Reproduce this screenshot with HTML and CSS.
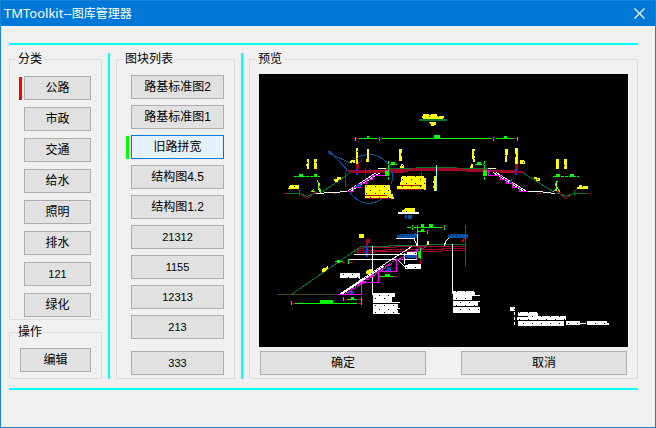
FILE: index.html
```html
<!DOCTYPE html>
<html lang="zh-CN">
<head>
<meta charset="utf-8">
<title>TMToolkit--图库管理器</title>
<link rel="stylesheet" href="styles.css">
</head>
<body>
<div class="window">
  <header class="titlebar">
    <h1><span class="product">TMToolkit--</span>图库管理器</h1>
    <button class="close" type="button" aria-label="关闭">
      <svg width="11" height="11" viewBox="0 0 11 11"><path d="M.5 .5l10 10M10.5 .5l-10 10"/></svg>
    </button>
  </header>
  <main>
    <div class="rule"></div>
    <div class="columns">
      <div class="side">
        <fieldset>
          <legend>分类</legend>
          <div class="categories">
            <button type="button" class="marked red">公路</button>
            <button type="button">市政</button>
            <button type="button">交通</button>
            <button type="button">给水</button>
            <button type="button">照明</button>
            <button type="button">排水</button>
            <button type="button" class="num">121</button>
            <button type="button">绿化</button>
          </div>
        </fieldset>
        <fieldset>
          <legend>操作</legend>
          <div class="actions"><button type="button">编辑</button></div>
        </fieldset>
      </div>
      <div class="divider"></div>
      <fieldset>
        <legend>图块列表</legend>
        <div class="blocks">
          <button type="button">路基标准图2</button>
          <button type="button">路基标准图1</button>
          <button type="button" class="marked green selected">旧路拼宽</button>
          <button type="button">结构图4.5</button>
          <button type="button">结构图1.2</button>
          <button type="button" class="num">21312</button>
          <button type="button" class="num">1155</button>
          <button type="button" class="num">12313</button>
          <button type="button" class="num">213</button>
          <button type="button" class="num last">333</button>
        </div>
      </fieldset>
      <div class="divider"></div>
      <fieldset>
        <legend>预览</legend>
        <div class="preview">
          <svg class="drawing" viewBox="259 74 369 273" role="img" aria-label="旧路拼宽">
            <defs>
              <pattern id="grain" width="9" height="7" patternUnits="userSpaceOnUse">
                <rect width="9" height="7" fill="#fff"/>
                <path d="M1 1h1v1h-1zM6 4h1v1h-1z"/>
              </pattern>
              <mask id="lettering" maskUnits="userSpaceOnUse" x="259" y="74" width="369" height="273">
                <rect x="259" y="74" width="369" height="273" fill="url(#grain)"/>
              </mask>
            </defs>
            <rect class="paper" x="259" y="74" width="369" height="273"/>

            <!-- upper section: dimension line -->
            <path class="lime" d="M355 138.500H517M355.500 137v4M493.500 137v4M517.500 137v4M379.500 137v4"/>
            <path class="crimson" d="M356 138.500h3M377 138.500h5M491 138.500h5M514 138.500h3"/>
            <path class="lime-fill" d="M367 136h2v2h-2zM434 135h6v4h-6zM504 136h3v3h-3z"/>

            <!-- upper section: ground, slopes and ditches -->
            <path class="forest" d="M283 193.500H300L307 196.500 314 193.500H320L352 171.500M522 172.500L553 191.500M556 193.500H559L566 196.500 573 193.500H590M299.500 190v6M574.500 190v6"/>
            <path class="crimson" d="M283 193.500h4M301 194.500l6 4 6-4M587 193.500h4M560 194.500l6 4 6-4M574 192l4-4M296 188l3 3M333 193.500h3M537 193.500h4M311 191.500l6 1M556 191.500l5 1"/>
            <path class="white" d="M316 193.500h8M324 192.500h10l13-1L378 171.500M350 191.500L382 171.500M496 172.500L527 191.500h12l16 2M493 172.500L524 191.500M378 168.500h8M488 168.500h8"/>
            <path class="crimson-fill" d="M354 170h30v-1h28v-1h50v1h26v1h28v1h5v1h2v1h-20v-2h-20v1h-17v-1h-58v1h-60v-2h-2v1h-4z"/>
            <path class="crimson" d="M351 172.500H404M350 171.500h4M468 171.500h55M500 172.500h24M421.500 171v5M365.500 168v10M358 163.500l4-3M517 163.500l5-2"/>
            <path class="magenta" d="M347 191.500H353.500V187.500H360.500V183.500H366.500V179.500H372.500V175.500H385.500V170.500H389M483 170.500H488.500V175.500H500.500V179.500H506.500V183.500H512.500V187.500H519.500V191.500H528"/>
            <path class="forest" d="M386 168.500h26M416 167.500h41M462 168.500h26"/>
            <path class="crimson-fill" d="M356 164h3v5h-3zM515 164h3v6h-3z"/>
            <path class="blue-fill" d="M356 169h2v2h-2zM356 173h2v2h-2zM515 169h2v2h-2zM515 173h2v2h-2z"/>
            <path class="navy-fill" d="M355 187l3-4 3 2v2zM508 182l4-3v4h-3z"/>
            <path class="cyan" d="M436.500 165v26"/>
            <path class="navy" d="M331 153L346.500 169Q344 180 346 187M349 191Q357 203 369 203.500 379 202 383 198M391 184Q395 176 391 168 382 154 369 154.500 360 155 355 159M331 154L350 163"/>
            <path class="navy-fill" d="M328 151h3v2h2v1h-3v1h-1z"/>
            <path class="lime dashed" d="M294 176.500h26M553 176.500h26M390 164.500h8M475 164.500h9M388.500 161v19M484.500 161v19"/>
            <path class="lime-fill" d="M299 174h4v3h-4zM314 174h3v3h-3zM556 174h4v3h-4zM570 174h4v3h-4zM385 171h4v5h-4zM483 171h4v5h-4zM391 162h4v3h-4zM477 162h4v3h-4z"/>
            <path class="leaf" d="M317 180l2 4-1 3 3 4M320 183l-2 5 3 5M314 189l-2 2h3M558 181l-3 4 3 3-5 4M555 184l3 5 2 3M556 181v10"/>

            <!-- lower section: road bed -->
            <path class="olive" d="M277 294.500h63"/>
            <path class="forest" d="M292 294L361 246.500H388V245.500H426V244.500H465"/>
            <path class="crimson" d="M361 248.500L366 247.500H395V246.500H465M358 250.500H386V249.500H442V248.500H465M357 252.500H374V251.500H441V250.500H465M355 252.500L361 247.500M366 254.500l-3-7"/>
            <path class="crimson-fill" d="M366 239h4v4h-2v3h-2z"/>
            <path class="blue-fill" d="M366 246h2v11h-2z"/>
            <path class="white" d="M354 254.500H412M348 259.500H398M340 294L390 260.500 412 246.500M342 294L384 266M372.500 246v49M452.500 244v50M396 238.500h18l3 7M417.500 234v12M444 246l2-5 3-3M404.500 253v11M398 260l7 7M400 259.500h17M404 254.500h12M358 277l3 3"/>
            <path class="magenta" d="M338 294.500H361.500V282.500H378.500V271.500H396.500V259.500H404M416.500 249v10"/>
            <path class="magenta dashed" d="M345 293.500L391 262.500 426 246.500M347 293.500L392 263.500"/>
            <path class="lime" d="M291 303.500h70M291.500 301v4M361.500 301v4M343 299.500h18M343.500 297v4M361.500 297v4M379 276.500h15M407 227.500h38M412.500 225v5M417.500 225v8M444.500 225v5M417 231.500h10M427.500 230v4M335 261.500h8M348.500 259v5M420.500 247v17"/>
            <path class="crimson" d="M344 299.500h3M357 299.500h4M292 303.500h3M357 303.500h4M394 276.500h3M411 227.500h3M442 227.500h3M425 231.500h3M342 262.500h3M349 262.500h4M420.500 259v5M418 247.500h4"/>
            <path class="lime-fill" d="M320 300h13v4h-13zM351 297h3v3h-3zM385 274h5v3h-5zM421 224h3v4h-3zM429 224h4v4h-4zM421 229h3v3h-3zM337 260h3v3h-3zM418 251h3v7h-3z"/>
            <path class="navy-fill" d="M349 293l2-2h3v3h-5zM384 271l5-4h2v4zM406 255h10v3h-10z"/>
            <path class="red" d="M465.500 225v41M462 242l3-4"/>

            <!-- annotation lettering, drawn as dense strokes at this scale -->
            <g mask="url(#lettering)">
              <path class="yellow-fill" d="M422 118v-2h1v-2h6v1h2v-1h6v2h7v2h-1v1h-20zM429 122h7v3h-2v1h-3v-2h-2z"/>
              <path class="yellow-fill" d="M307 159h2v10h-2v-3h-1v-2h1zM314 159h3v10h-3zM356 148h2v16h-2zM367 149h2v13h-3v-3h1zM399 149h3v4h-1v3h1v5h-3zM401 164h2v1h1v3h-4zM472 149h3v3h-1v4h1v6h-2v-3h-1zM471 164h2v4h-3v-2h1zM505 149h3v6h-1v7h-2zM515 148h3v16h-3v-7h1v-3h-1zM520 160h4v1h1v3h-5zM351 160h4v3h-5zM556 159h3v10h-3zM564 159h3v10h-3z"/>
              <path class="yellow-fill" d="M288 188h1v-2h1v-1h9v4h-11zM577 189v-2h2v-2h3v1h6v3zM334 179h3v-2h4v3h-3v2h-3zM534 177h3v1h3v3h-4v-2h-2z"/>
              <path class="yellow-fill" d="M365 185h25v5h1v4h2v3h1v2h-3v-1h-26zM401 177h1v-1h22v2h2v12h-2v-1h-27v-3h3v-4h1zM434 176h2v15h-2v-3h-1v-2h1v-3h-1v-2h1z"/>
              <path class="yellow-fill" d="M402 210h2v-1h1v-1h10v4h-13zM359 234h5v4h-5zM322 269l6-3v3l-4 3h-2zM366 270l6-1v2l-3 3h-3zM427 241h2v4h-2z"/>
              <path class="navy-fill" d="M405 215h2v4h-2zM408 215h4v4h-4zM397 235h3v-1h14v-1h3v5h-20zM448 238v-3h3v-1h17v4z"/>
              <path class="white-fill" d="M340 273h20v5h-20zM405 265h3v-1h13v5h-16zM407 252h10v3h-10zM373 293h22v4h-3v5h-19zM373 304h25v10h-25zM453 291h22v5h-22zM453 296h19v4h-19zM453 301h25v5h-25zM453 307h27v6h-27z"/>
              <path class="white-fill" d="M510 307h5v4h-5zM518 312h20v4h-20zM517 317h11v-1h38v4h-49zM518 321h46v5h-46zM566 321h14v2h6v1h-6v1h-14zM587 321h20v2h2v2h-22z"/>
            </g>
            <path class="white" d="M514.500 312v3M514.500 317v3M514.500 322v3M373 302.500h27M373 308.500h27M373 313.500h27M453 295.500h27M453 301.500h27M453 312.500h27"/>
            <path class="white-fill" d="M398 212h21v2h-21z"/>
            <path class="forest-fill" d="M419 119h28v2h-28z"/>
            <path class="crimson" d="M365 195.500h22M365 198.500h26M400 185.500h22M397 189.500h25"/>
          </svg>
          <div class="confirm">
            <button type="button">确定</button>
            <button type="button">取消</button>
          </div>
        </div>
      </fieldset>
    </div>
    <div class="rule"></div>
  </main>
</div>
</body>
</html>
```
FILE: styles.css
```css
* { box-sizing: border-box; }

body {
  margin: 0;
  background: #f0f0f0;
  color: #000;
  font: 12px/13px "Liberation Sans", "Noto Sans CJK SC", sans-serif;
}

.window {
  min-height: 100vh;
  border: 1px solid #1883d7;
}

.titlebar {
  display: flex;
  align-items: center;
  justify-content: space-between;
  height: 25px;
  padding: 0 4px 0 3px;
  background: #0078d7;
  color: #fff;
}

.titlebar h1 {
  margin: 0;
  font: 12px/24px "Noto Sans", "Noto Sans CJK SC", sans-serif;
}

.product { font-size: 13px; }

.titlebar .close {
  display: grid;
  place-items: center;
  width: 23px;
  height: 24px;
  padding: 0;
  border: 0;
  background: none;
}

.close path {
  fill: none;
  stroke: #fff;
  stroke-width: 1.2;
}

main { padding: 17px 17px 17px 8px; }

.rule {
  height: 2px;
  background: #0ff;
}

.columns {
  display: grid;
  grid-template-columns: 93px 2px 119px 2px minmax(0, 1fr);
  gap: 6px;
  margin: 8px 0 9px;
}

.divider { background: #0ff; }

.side {
  display: flex;
  flex-direction: column;
  gap: 6px;
}

fieldset {
  min-width: 0;
  margin: 0;
  padding: 0;
  border: 1px solid #dcdcdc;
}

legend {
  margin-left: 6px;
  padding: 0 2px;
}

button {
  position: relative;
  width: 100%;
  height: 24px;
  padding: 0;
  border: 1px solid #adadad;
  border-radius: 0;
  background: #e1e1e1;
  color: #000;
  font: inherit;
}

.num { font-size: 11px; }

.selected {
  border-color: #0078d7;
  background: #e5f1fb;
}

.marked::before {
  content: "";
  position: absolute;
  top: 0;
  bottom: -1px;
  left: -6px;
  width: 3px;
}

.red::before { background: #f00; }
.green::before { background: #0f0; }

.categories,
.blocks {
  display: flex;
  flex-direction: column;
}

.categories {
  gap: 7px;
  padding: 10px 10px 2px 14px;
}

.actions { padding: 9px 10px 6px; }

.blocks {
  gap: 6px;
  padding: 9px 10px 3px 14px;
}

.last { margin-top: 6px; }

.preview { padding: 8px 9px 3px; }

.confirm {
  display: flex;
  gap: 35px;
  padding: 4px 1px 0;
}

.drawing {
  display: block;
  width: 100%;
  height: auto;
  shape-rendering: crispEdges;
}

.drawing path { fill: none; }
.drawing .paper { fill: #000; }
.drawing .lime { stroke: #0f0; }
.drawing .leaf { stroke: #7fff00; }
.drawing .crimson { stroke: #a50029; }
.drawing .forest { stroke: #007a29; }
.drawing .olive { stroke: #4c4420; }
.drawing .white { stroke: #fff; }
.drawing .magenta { stroke: #f0f; }
.drawing .cyan { stroke: #7ff; }
.drawing .navy { stroke: #0052a5; }
.drawing .red { stroke: #f00; }
.drawing .dashed { stroke-dasharray: 3 1; }
.drawing .lime-fill { fill: #0f0; }
.drawing .crimson-fill { fill: #a50029; }
.drawing .forest-fill { fill: #007a29; }
.drawing .blue-fill { fill: #0040ff; }
.drawing .navy-fill { fill: #0052a5; }
.drawing .yellow-fill { fill: #ff0; }
.drawing .white-fill { fill: #fff; }
.drawing pattern path { fill: #000; }
```
